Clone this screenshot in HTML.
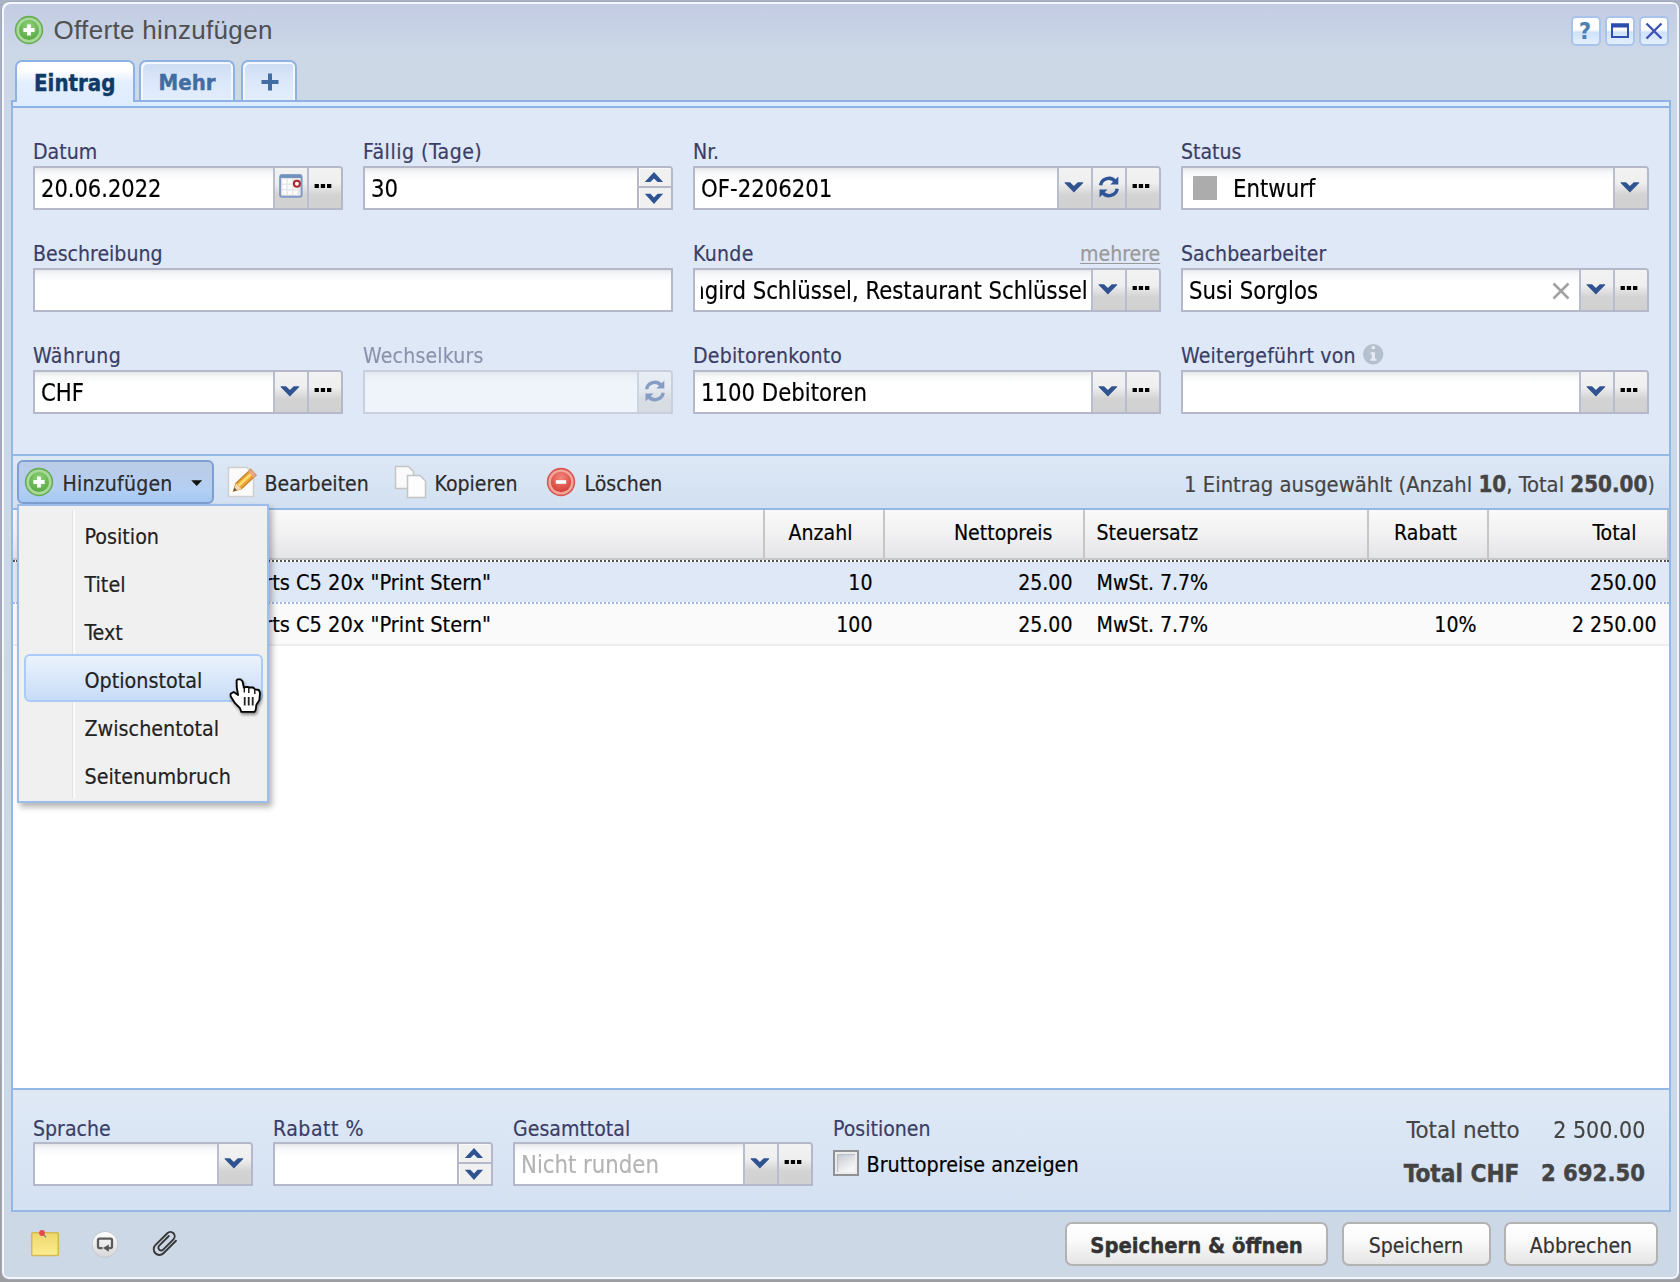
<!DOCTYPE html>
<html lang="de"><head><meta charset="utf-8"><title>Offerte hinzufügen</title>
<style>
*{box-sizing:border-box;margin:0;padding:0}
html,body{width:1680px;height:1282px;overflow:hidden}
body{-webkit-text-stroke:.18px;background:linear-gradient(#a8b1c6,#9c9da0);font-family:"DejaVu Sans Condensed","Liberation Sans",sans-serif;font-size:21.1px;color:#000;position:relative}
.abs{position:absolute}
.t{position:absolute;white-space:nowrap;line-height:1}
.t11{font-size:21.1px}.t12{font-size:23px}
.b11{font-size:21.5px;font-weight:bold;-webkit-text-stroke:.4px}.b12{font-size:23.6px;font-weight:bold;-webkit-text-stroke:.4px}
b{-webkit-text-stroke:.4px}
#win{position:absolute;left:1px;top:1px;width:1679px;height:1279px;border-radius:8px;background:linear-gradient(#c2cbe3 0,#c7d1e5 24px,#cdd8e7 56px,#cdd8e7 100%);border:1px solid #a3a9b6;box-shadow:inset 2px 2px 0 #f4f7fb,inset 0 -2px 0 #f4f7fb,inset -2px 0 0 #f0f5fb}
.lbl{position:absolute;white-space:nowrap;line-height:1;font-size:21.1px;color:#3a3d66}
.fld{position:absolute;height:44px;border:2px solid #b5b8c8;background:linear-gradient(#e4e7ea 0,#f6f7f8 4px,#fff 12px,#fff 100%);border-radius:0 4px 0 0;overflow:hidden}
.fld.plain{border-radius:0}
.fld .v{position:absolute;left:6px;top:9px;font-size:24px;line-height:1;white-space:nowrap;transform:scaleX(.985);transform-origin:left center}
.trg{position:absolute;top:0;width:34px;height:40px;border-left:2px solid #b8bdd0;background:linear-gradient(#f2f2f2 0,#efefef 15px,#d3d3d3 27px,#d1d1d1 100%)}
.trg svg{position:absolute;left:0;top:0}
.spin{position:absolute;top:0;width:34px;height:40px;border-left:2px solid #b5b8c8;background:#f0f0f0;box-shadow:inset 1px 1px 0 #fafafa}
.spin:after{content:"";position:absolute;left:0;right:0;top:18px;height:2px;background:#b5b8c8}
.dis{opacity:.5}
</style></head>
<body>
<div id="win"></div>
<svg class="abs" style="left:14px;top:15px" width="30" height="30" viewBox="0 0 30 30"><defs><radialGradient id="gg" cx="50%" cy="30%" r="75%"><stop offset="0" stop-color="#8fd279"/><stop offset="1" stop-color="#55a540"/></radialGradient></defs><circle cx="15" cy="15" r="14.2" fill="#66ad52"/><circle cx="15" cy="15" r="12.600" fill="#a9d99a"/><circle cx="15" cy="15" r="10" fill="url(#gg)"/><path d="M13.100 9.400h3.800v3.700h3.700v3.800h-3.700v3.700h-3.800v-3.700H9.400v-3.800h3.700z" fill="#fff"/></svg>
<div class="t" style="left:53.5px;top:17.100px;font-family:'Liberation Sans',sans-serif;font-size:26px;letter-spacing:.32px;color:#505050;-webkit-text-stroke:0">Offerte hinzufügen</div>
<div class="abs" style="left:1571px;top:16px;width:30px;height:30px;border:2px solid #a9c4ec;border-radius:5px;background:linear-gradient(#fff 0,#fff 45%,#cfe2fa 55%,#e3effd 100%)"><div class="t" style="left:6px;top:1.5px;font-weight:bold;font-size:23px;color:#4f7fb0">?</div></div>
<div class="abs" style="left:1605px;top:16px;width:30px;height:30px;border:2px solid #a9c4ec;border-radius:5px;background:linear-gradient(#fff 0,#fff 45%,#cfe2fa 55%,#e3effd 100%)"><svg width="26" height="26" viewBox="0 0 26 26" style="position:absolute;left:0;top:0"><rect x="5" y="6.5" width="16" height="12.5" fill="none" stroke="#2d4eb0" stroke-width="2"/><rect x="4" y="5.5" width="18" height="4" fill="#2d4eb0"/></svg></div>
<div class="abs" style="left:1639px;top:16px;width:30px;height:30px;border:2px solid #a9c4ec;border-radius:5px;background:linear-gradient(#fff 0,#fff 45%,#cfe2fa 55%,#e3effd 100%)"><svg width="26" height="26" viewBox="0 0 26 26" style="position:absolute;left:0;top:0"><path d="M5.5 5.5l15 15M20.500 5.5l-15 15" stroke="#3e53b3" stroke-width="2.4"/></svg></div>
<div class="abs" style="left:11px;top:100px;width:1660px;height:8px;background:#deecfd;border-top:2px solid #8db2e3;border-bottom:2px solid #8db2e3;border-left:2px solid #8db2e3;border-right:2px solid #8db2e3"></div>
<div class="abs" style="left:15px;top:60px;width:120px;height:42px;border:2px solid #8db2e3;border-bottom:none;border-radius:7px 7px 0 0;background:linear-gradient(#fff 0,#fff 8px,#e4effd 20px,#deecfd 100%)"></div>
<div class="t b11" style="left:34px;top:71.500px;color:#0f3a66;font-size:22.100px">Eintrag</div>
<div class="abs" style="left:139px;top:60px;width:96px;height:40px;border:2px solid #8db2e3;border-bottom:none;border-radius:7px 7px 0 0;background:linear-gradient(#cddcf3 0,#dbe7fa 50%,#e3eefc 100%);box-shadow:inset 2px 2px 0 #f4f8fe,inset -2px 0 0 #f4f8fe"></div>
<div class="t b11" style="left:158.500px;top:71.500px;color:#416da3;font-size:22px">Mehr</div>
<div class="abs" style="left:241px;top:60px;width:56px;height:40px;border:2px solid #8db2e3;border-bottom:none;border-radius:7px 7px 0 0;background:linear-gradient(#cddcf3 0,#dbe7fa 50%,#e3eefc 100%);box-shadow:inset 2px 2px 0 #f4f8fe,inset -2px 0 0 #f4f8fe"></div>
<svg class="abs" style="left:260px;top:72px" width="20" height="20"><path d="M8 1.500h4v6.500h6.500v4h-6.500v6.500h-4v-6.500h-6.500v-4h6.500z" fill="#416da3"/></svg>
<div class="abs" style="left:11px;top:108px;width:1660px;height:1104px;border:2px solid #94b8e6;border-top:none;background:#fff"></div>
<div class="abs" style="left:13px;top:108px;width:1656px;height:346px;background:#dfe8f6"></div>
<div class="abs" style="left:13px;top:454px;width:1656px;height:2px;background:#94b8e6"></div>
<div class="abs" style="left:13px;top:456px;width:1656px;height:52px;background:linear-gradient(#dde8f6,#d2e0f1)"></div>
<div class="abs" style="left:13px;top:508px;width:1656px;height:2px;background:#94b8e6"></div>
<div class="abs" style="left:13px;top:1088px;width:1656px;height:2px;background:#94b8e6"></div>
<div class="abs" style="left:13px;top:1090px;width:1656px;height:120px;background:linear-gradient(#dfe9f6,#d4e1f2)"></div>
<div class="lbl" style="left:33px;top:141.4px;">Datum</div>
<div class="fld " style="left:33px;top:166px;width:310px"><span class="v" style="transform:scaleX(.975)">20.06.2022</span><div class="trg" style="left:238px"><svg width="32" height="40" viewBox="-0.9 0 32 40"><rect x="4.200" y="7.200" width="21.500" height="21.500" rx="2" fill="#e6e6e8" stroke="#7f9ac5" stroke-width="2"/><rect x="4.200" y="6.600" width="21.500" height="3.400" rx="1" fill="#7391bf"/><g fill="#fff"><rect x="6.500" y="11.500" width="4" height="4"/><rect x="12" y="11.500" width="4" height="4"/><rect x="6.500" y="17" width="4" height="4"/><rect x="12" y="17" width="4" height="4"/><rect x="17.500" y="17" width="4" height="4"/><rect x="6.500" y="22.500" width="4" height="4"/><rect x="12" y="22.500" width="4" height="4"/><rect x="17.500" y="22.500" width="4" height="4"/></g><circle cx="21" cy="15.800" r="3" fill="#fff" stroke="#ac2a2e" stroke-width="2.100"/></svg></div><div class="trg" style="left:272px"><svg width="32" height="40" viewBox="0 0 32 40"><rect x="5.6" y="16" width="4.3" height="4" fill="#000"/><rect x="11.8" y="16" width="4.3" height="4" fill="#000"/><rect x="18" y="16" width="4.3" height="4" fill="#000"/></svg></div></div>
<div class="lbl" style="left:363px;top:141.4px;letter-spacing:.5px">Fällig (Tage)</div>
<div class="fld " style="left:363px;top:166px;width:310px"><span class="v" style="">30</span><div class="spin" style="left:272px"><svg width="32" height="40" viewBox="0 0 32 40" style="position:absolute;left:0;top:0"><path d="M5.800 14.100L15 3.900l9.100 10.200h-5.500L15 10.400l-3.600 3.700z" fill="#2f5291"/><path d="M5.800 25.800h5.600l3.600 3.700 3.600-3.700h5.500L15 36z" fill="#2f5291"/></svg></div></div>
<div class="lbl" style="left:693px;top:141.4px;">Nr.</div>
<div class="fld " style="left:693px;top:166px;width:468px"><span class="v" style="">OF-2206201</span><div class="trg" style="left:362px"><svg width="32" height="40" viewBox="0 0 32 40"><path d="M5.6 14.2H11l3.9 3.7 3.9-3.7h5.400v.9l-9.300 9.400-9.300-9.400z" fill="#2f5291"/></svg></div><div class="trg" style="left:396px"><svg width="32" height="40" viewBox="0 0 32 40"><g fill="none" stroke="#2f5596" stroke-width="3.4"><path d="M7.600 17.200a8.300 8.300 0 0 1 14.800-3.600"/><path d="M24.200 20.800a8.300 8.300 0 0 1-14.800 3.600"/></g><path d="M25.300 8.600v8h-8z" fill="#2f5596"/><path d="M6.500 29.400v-8h8z" fill="#2f5596"/></svg></div><div class="trg" style="left:430px"><svg width="32" height="40" viewBox="0 0 32 40"><rect x="5.6" y="16" width="4.3" height="4" fill="#000"/><rect x="11.8" y="16" width="4.3" height="4" fill="#000"/><rect x="18" y="16" width="4.3" height="4" fill="#000"/></svg></div></div>
<div class="lbl" style="left:1181px;top:141.4px;">Status</div>
<div class="fld " style="left:1181px;top:166px;width:468px"><div class="abs" style="left:10px;top:8px;width:24px;height:24px;background:#acacac"></div><span class="v" style="left:50px">Entwurf</span><div class="trg" style="left:430px"><svg width="32" height="40" viewBox="0 0 32 40"><path d="M5.6 14.2H11l3.9 3.7 3.9-3.7h5.400v.9l-9.300 9.400-9.300-9.400z" fill="#2f5291"/></svg></div></div>
<div class="lbl" style="left:33px;top:243.4px;">Beschreibung</div>
<div class="fld plain" style="left:33px;top:268px;width:640px"></div>
<div class="lbl" style="left:693px;top:243.4px;letter-spacing:.3px">Kunde</div>
<div class="lbl" style="left:1080px;top:243.4px;color:#999;text-decoration:underline;text-decoration-thickness:1.3px;text-underline-offset:2px">mehrere</div>
<div class="fld " style="left:693px;top:268px;width:468px"><div class="abs" style="left:6px;top:0;width:387px;height:40px;overflow:hidden"><span class="v" style="left:auto;right:0px;transform-origin:right center">Irmgird Schlüssel, Restaurant Schlüssel</span></div><div class="trg" style="left:396px"><svg width="32" height="40" viewBox="0 0 32 40"><path d="M5.6 14.2H11l3.9 3.7 3.9-3.7h5.400v.9l-9.300 9.400-9.300-9.400z" fill="#2f5291"/></svg></div><div class="trg" style="left:430px"><svg width="32" height="40" viewBox="0 0 32 40"><rect x="5.6" y="16" width="4.3" height="4" fill="#000"/><rect x="11.8" y="16" width="4.3" height="4" fill="#000"/><rect x="18" y="16" width="4.3" height="4" fill="#000"/></svg></div></div>
<div class="lbl" style="left:1181px;top:243.4px;">Sachbearbeiter</div>
<div class="fld " style="left:1181px;top:268px;width:468px"><svg class="abs" style="left:368px;top:11px" width="20" height="20"><path d="M2.500 2.500l15 15M17.500 2.500l-15 15" stroke="#a2a2a2" stroke-width="2.600"/></svg><span class="v" style="">Susi Sorglos</span><div class="trg" style="left:396px"><svg width="32" height="40" viewBox="0 0 32 40"><path d="M5.6 14.2H11l3.9 3.7 3.9-3.7h5.400v.9l-9.300 9.400-9.300-9.400z" fill="#2f5291"/></svg></div><div class="trg" style="left:430px"><svg width="32" height="40" viewBox="0 0 32 40"><rect x="5.6" y="16" width="4.3" height="4" fill="#000"/><rect x="11.8" y="16" width="4.3" height="4" fill="#000"/><rect x="18" y="16" width="4.3" height="4" fill="#000"/></svg></div></div>
<div class="lbl" style="left:33px;top:345.4px;letter-spacing:.45px">Währung</div>
<div class="fld " style="left:33px;top:370px;width:310px"><span class="v" style="">CHF</span><div class="trg" style="left:238px"><svg width="32" height="40" viewBox="0 0 32 40"><path d="M5.6 14.2H11l3.9 3.7 3.9-3.7h5.400v.9l-9.300 9.400-9.300-9.400z" fill="#2f5291"/></svg></div><div class="trg" style="left:272px"><svg width="32" height="40" viewBox="0 0 32 40"><rect x="5.6" y="16" width="4.3" height="4" fill="#000"/><rect x="11.8" y="16" width="4.3" height="4" fill="#000"/><rect x="18" y="16" width="4.3" height="4" fill="#000"/></svg></div></div>
<div class="dis"><div class="lbl" style="left:363px;top:345.4px;letter-spacing:.18px">Wechselkurs</div><div class="fld " style="left:363px;top:370px;width:310px"><div class="trg" style="left:272px"><svg width="32" height="40" viewBox="0 0 32 40"><g fill="none" stroke="#2f5596" stroke-width="3.4"><path d="M7.600 17.200a8.300 8.300 0 0 1 14.800-3.600"/><path d="M24.200 20.800a8.300 8.300 0 0 1-14.800 3.600"/></g><path d="M25.300 8.600v8h-8z" fill="#2f5596"/><path d="M6.500 29.400v-8h8z" fill="#2f5596"/></svg></div></div></div>
<div class="lbl" style="left:693px;top:345.4px;letter-spacing:.18px">Debitorenkonto</div>
<div class="fld " style="left:693px;top:370px;width:468px"><span class="v" style="">1100 Debitoren</span><div class="trg" style="left:396px"><svg width="32" height="40" viewBox="0 0 32 40"><path d="M5.6 14.2H11l3.9 3.7 3.9-3.7h5.400v.9l-9.300 9.400-9.300-9.400z" fill="#2f5291"/></svg></div><div class="trg" style="left:430px"><svg width="32" height="40" viewBox="0 0 32 40"><rect x="5.6" y="16" width="4.3" height="4" fill="#000"/><rect x="11.8" y="16" width="4.3" height="4" fill="#000"/><rect x="18" y="16" width="4.3" height="4" fill="#000"/></svg></div></div>
<div class="lbl" style="left:1181px;top:345.4px;letter-spacing:.18px">Weitergeführt von</div>
<svg class="abs" style="left:1363px;top:344px" width="21" height="21" viewBox="0 0 21 21"><circle cx="10.200" cy="10.200" r="10.200" fill="#b5c0cf"/><path d="M8.700 2.300h3.200v2.700h-3.200zM7.600 8.200h4.300v6.500h1.500v2.100h-6.100v-2.100h1.500v-4.400h-1.200z" fill="#e6ebf4"/></svg>
<div class="fld " style="left:1181px;top:370px;width:468px"><div class="trg" style="left:396px"><svg width="32" height="40" viewBox="0 0 32 40"><path d="M5.6 14.2H11l3.9 3.7 3.9-3.7h5.400v.9l-9.300 9.400-9.300-9.400z" fill="#2f5291"/></svg></div><div class="trg" style="left:430px"><svg width="32" height="40" viewBox="0 0 32 40"><rect x="5.6" y="16" width="4.3" height="4" fill="#000"/><rect x="11.8" y="16" width="4.3" height="4" fill="#000"/><rect x="18" y="16" width="4.3" height="4" fill="#000"/></svg></div></div>
<div class="abs" style="left:17px;top:460px;width:197px;height:44px;border:2px solid #7f9fd2;border-radius:6px;background:linear-gradient(#bacbe6 0,#b8ceed 40%,#b3cff3 70%,#a5c8f3 100%)"></div>
<svg class="abs" style="left:24px;top:467px" width="30" height="30" viewBox="0 0 30 30"><circle cx="15" cy="15" r="14.2" fill="#66ad52"/><circle cx="15" cy="15" r="12.600" fill="#a9d99a"/><circle cx="15" cy="15" r="10" fill="url(#gg)"/><path d="M13.100 9.400h3.800v3.700h3.700v3.800h-3.700v3.700h-3.800v-3.700H9.400v-3.800h3.700z" fill="#fff"/></svg>
<div class="t t11" style="left:62.500px;top:472.900px;color:#2b2b2b;letter-spacing:.2px">Hinzufügen</div>
<svg class="abs" style="left:190px;top:479px" width="14" height="9"><path d="M1.200 1.200h11l-5.500 5.800z" fill="#111"/></svg>
<svg class="abs" style="left:226px;top:465px" width="34" height="34" viewBox="0 0 34 34"><path d="M2.500 2.500h18.500l6.500 6.500v22.500h-25z" fill="#fbfbfb" stroke="#cfcfcf" stroke-width="1.500"/><path d="M7.500 26.200l2.600-8 14.600-13.800 5.400 5.800-14.600 13.600z" fill="#eea43c" stroke="#c4802a" stroke-width="1.200"/><path d="M11.800 19.600l14.400-13.400 1.800 1.900-14.400 13.400z" fill="#fbe06a"/><path d="M7.500 26.200l2.600-8 5.400 5.800z" fill="#f3d9ad"/><path d="M7.500 26.200l1.100-3.400 2.300 2.400z" fill="#5a4630"/><path d="M22.300 6.600l2.400-2.200 5.400 5.800-2.400 2.200z" fill="#e8a48f"/></svg>
<div class="t t11" style="left:264.500px;top:472.900px;color:#2b2b2b">Bearbeiten</div>
<svg class="abs" style="left:394px;top:465px" width="34" height="34" viewBox="0 0 34 34"><path d="M1.500 1.500h13l5 5v17h-18z" fill="#fafafa" stroke="#c4c4c4" stroke-width="1.500"/><path d="M13.500 10.500h12.500l5.500 5.500v16.500h-18z" fill="#fdfdfd" stroke="#c4c4c4" stroke-width="1.500"/></svg>
<div class="t t11" style="left:434.500px;top:472.900px;color:#2b2b2b">Kopieren</div>
<svg class="abs" style="left:546px;top:467px" width="30" height="30" viewBox="0 0 30 30"><defs><radialGradient id="rg" cx="50%" cy="30%" r="75%"><stop offset="0" stop-color="#f5867b"/><stop offset="1" stop-color="#d23a33"/></radialGradient></defs><circle cx="15" cy="15" r="14.200" fill="#d9564e"/><circle cx="15" cy="15" r="12.600" fill="#f1a59d"/><circle cx="15" cy="15" r="10.200" fill="url(#rg)"/><rect x="9.800" y="13.200" width="10.400" height="3.600" fill="#fff"/></svg>
<div class="t t11" style="left:584.500px;top:472.900px;color:#2b2b2b">Löschen</div>
<div class="t" style="right:25px;top:472.500px;color:#444;font-size:21.800px">1 Eintrag ausgewählt (Anzahl <b style="font-size:22.200px">10</b>, Total <b style="font-size:22.200px">250.00</b>)</div>
<div class="abs" style="left:13px;top:510px;width:1656px;height:50px;background:linear-gradient(#f9f9f9 0,#f1f1f2 50%,#e4e5e7 100%);border-bottom:2px solid #c6c6c6"></div>
<div class="abs" style="left:763px;top:510px;width:2px;height:48px;background:#c6c6c6"></div>
<div class="abs" style="left:883px;top:510px;width:2px;height:48px;background:#c6c6c6"></div>
<div class="abs" style="left:1083px;top:510px;width:2px;height:48px;background:#c6c6c6"></div>
<div class="abs" style="left:1367px;top:510px;width:2px;height:48px;background:#c6c6c6"></div>
<div class="abs" style="left:1487px;top:510px;width:2px;height:48px;background:#c6c6c6"></div>
<div class="abs" style="left:1667px;top:510px;width:2px;height:50px;background:#c2c2c2"></div>
<div class="t t11" style="right:827.5px;top:522px">Anzahl</div>
<div class="t t11" style="right:627.5px;top:522px">Nettopreis</div>
<div class="t t11" style="left:1096.5px;top:522px">Steuersatz</div>
<div class="t t11" style="right:223px;top:522px">Rabatt</div>
<div class="t t11" style="right:43.5px;top:522px">Total</div>
<div class="abs" style="left:13px;top:560px;width:1656px;height:44px;background:#dfe8f6;background-clip:padding-box;border-top:2px dotted #555;border-bottom:2px dotted #a3bae9"></div>
<div class="abs" style="left:13px;top:604px;width:1656px;height:42px;background:#fafafa;border-bottom:2px solid #ededed"></div>
<div class="t t11" style="right:1189px;top:572.1px"><span style="font-size:21.600px">T-Shirts C5 20x "Print Stern"</span></div>
<div class="t t11" style="right:807.5px;top:572.1px">10</div>
<div class="t t11" style="right:607.5px;top:572.1px">25.00</div>
<div class="t t11" style="left:1096.5px;top:572.1px">MwSt. 7.7%</div>
<div class="t t11" style="right:23.5px;top:572.1px">250.00</div>
<div class="t t11" style="right:1189px;top:614.1999999999999px"><span style="font-size:21.600px">T-Shirts C5 20x "Print Stern"</span></div>
<div class="t t11" style="right:807.5px;top:614.1999999999999px">100</div>
<div class="t t11" style="right:607.5px;top:614.1999999999999px">25.00</div>
<div class="t t11" style="left:1096.5px;top:614.1999999999999px">MwSt. 7.7%</div>
<div class="t t11" style="right:203.5px;top:614.1999999999999px">10%</div>
<div class="t t11" style="right:23.5px;top:614.1999999999999px">2 250.00</div>
<div class="lbl" style="left:33px;top:1118.4px;">Sprache</div>
<div class="fld " style="left:33px;top:1142px;width:220px"><div class="trg" style="left:182px"><svg width="32" height="40" viewBox="0 0 32 40"><path d="M5.6 14.2H11l3.9 3.7 3.9-3.7h5.400v.9l-9.300 9.400-9.300-9.400z" fill="#2f5291"/></svg></div></div>
<div class="lbl" style="left:273px;top:1118.4px;letter-spacing:.5px">Rabatt %</div>
<div class="fld " style="left:273px;top:1142px;width:220px"><div class="spin" style="left:182px"><svg width="32" height="40" viewBox="0 0 32 40" style="position:absolute;left:0;top:0"><path d="M5.800 14.100L15 3.900l9.100 10.200h-5.500L15 10.400l-3.600 3.700z" fill="#2f5291"/><path d="M5.800 25.800h5.600l3.600 3.700 3.600-3.700h5.500L15 36z" fill="#2f5291"/></svg></div></div>
<div class="lbl" style="left:513px;top:1118.4px;">Gesamttotal</div>
<div class="fld " style="left:513px;top:1142px;width:300px"><span class="v" style="color:#b4b4b4">Nicht runden</span><div class="trg" style="left:228px"><svg width="32" height="40" viewBox="0 0 32 40"><path d="M5.6 14.2H11l3.9 3.7 3.9-3.7h5.400v.9l-9.300 9.400-9.300-9.400z" fill="#2f5291"/></svg></div><div class="trg" style="left:262px"><svg width="32" height="40" viewBox="0 0 32 40"><rect x="5.6" y="16" width="4.3" height="4" fill="#000"/><rect x="11.8" y="16" width="4.3" height="4" fill="#000"/><rect x="18" y="16" width="4.3" height="4" fill="#000"/></svg></div></div>
<div class="lbl" style="left:833px;top:1118.4px;">Positionen</div>
<div class="abs" style="left:833px;top:1150px;width:26px;height:26px;border:2px solid #8f9194;background:#ececec"><div class="abs" style="left:2px;top:2px;width:18px;height:18px;background:linear-gradient(150deg,#c3c7d0 0,#dfe1e5 45%,#f5f5f5 80%);box-shadow:inset 1px 1px 1px #b9bdc6"></div></div>
<div class="t t11" style="left:866.500px;top:1153.500px;font-size:21.350px">Bruttopreise anzeigen</div>
<div class="t t12" style="right:160.500px;top:1118.600px;color:#444;font-size:23.800px">Total netto</div>
<div class="t t12" style="right:35px;top:1119.100px;color:#444;font-size:23.800px;transform:scaleX(.966);transform-origin:right center">2 500.00</div>
<div class="t b12" style="right:160.500px;top:1161.800px;color:#444;font-size:24.2px">Total CHF</div>
<div class="t b12" style="right:35px;top:1162px;color:#444">2 692.50</div>
<svg class="abs" style="left:29px;top:1227px" width="34" height="32" viewBox="0 0 34 32"><defs><linearGradient id="ng" x1="0" y1="0" x2="0" y2="1"><stop offset="0" stop-color="#efd86c"/><stop offset="1" stop-color="#fbec90"/></linearGradient></defs><rect x="2.700" y="5.700" width="26.600" height="22.800" rx="1" fill="url(#ng)" stroke="#d2ba55" stroke-width="1.600"/><path d="M13.500 6.500l3.600 3.800" stroke="#8a8a8a" stroke-width="1.500"/><circle cx="13" cy="6" r="2.900" fill="#e8474f"/></svg>
<svg class="abs" style="left:90px;top:1229px" width="30" height="30" viewBox="0 0 30 30"><defs><linearGradient id="cg" x1="0" y1="0" x2="0" y2="1"><stop offset="0" stop-color="#fff"/><stop offset="1" stop-color="#d6d6d6"/></linearGradient></defs><circle cx="15" cy="15.400" r="13" fill="url(#cg)" stroke="#c4c8ce" stroke-width="1"/><path d="M12.500 19.100H9.600a1.600 1.600 0 0 1-1.600-1.600V11.200a1.600 1.600 0 0 1 1.600-1.600h10.800a1.600 1.600 0 0 1 1.600 1.600v6.300a1.600 1.600 0 0 1-1.600 1.600h-2" fill="none" stroke="#5c5c5c" stroke-width="2.300"/><path d="M13 19.100l5.800-3.700v7.400z" fill="#555"/></svg>
<svg class="abs" style="left:150px;top:1228px" width="30" height="32" viewBox="0 0 30 32"><path transform="translate(15 15.500) rotate(45)" d="M5.800-9.700V8A5.700 5.700 0 0 1-5.600 8V-8.900A4.300 4.300 0 0 1 3-8.900V5.600A2.800 2.800 0 0 1-2.600 5.600V-8" fill="none" stroke="#363636" stroke-width="1.900" stroke-linecap="round"/></svg>
<div class="abs" style="left:1065px;top:1222px;width:263px;height:44px;border:2px solid #b3b3b3;border-radius:7px;background:linear-gradient(#fff 0,#fafafa 40%,#e5e5e5 100%);text-align:center"><span class="b11" style="position:relative;top:8.500px;line-height:1;color:#333;white-space:nowrap"><span style="font-size:21.850px">Speichern &amp; öffnen</span></span></div>
<div class="abs" style="left:1341.5px;top:1222px;width:149px;height:44px;border:2px solid #b3b3b3;border-radius:7px;background:linear-gradient(#fff 0,#fafafa 40%,#e5e5e5 100%);text-align:center"><span class="t11" style="position:relative;top:8.500px;line-height:1;color:#333;white-space:nowrap">Speichern</span></div>
<div class="abs" style="left:1504px;top:1222px;width:154px;height:44px;border:2px solid #b3b3b3;border-radius:7px;background:linear-gradient(#fff 0,#fafafa 40%,#e5e5e5 100%);text-align:center"><span class="t11" style="position:relative;top:8.500px;line-height:1;color:#333;white-space:nowrap">Abbrechen</span></div>
<div class="abs" style="left:17px;top:504px;width:252px;height:299px;background:#f0f0f0;border:2px solid #9dbdea;box-shadow:3px 4px 6px rgba(0,0,0,.30)"></div>
<div class="abs" style="left:72px;top:510px;width:3px;height:288px;background:linear-gradient(90deg,#e2e2e2 50%,#fafafa 50%)"></div>
<div class="abs" style="left:23.500px;top:654px;width:239.500px;height:48px;border:2px solid #a9cbf5;border-radius:6px;background:linear-gradient(#ebf3fd,#c8dcf6)"></div>
<div class="t t11" style="left:84.500px;top:525.9px;color:#222;font-size:21.300px">Position</div>
<div class="t t11" style="left:84.500px;top:573.9px;color:#222;font-size:21.300px">Titel</div>
<div class="t t11" style="left:84.500px;top:621.9px;color:#222;font-size:21.300px">Text</div>
<div class="t t11" style="left:84.500px;top:669.9px;color:#222;font-size:21.300px">Optionstotal</div>
<div class="t t11" style="left:84.500px;top:717.9px;color:#222;font-size:21.300px">Zwischentotal</div>
<div class="t t11" style="left:84.500px;top:765.9px;color:#222;font-size:21.300px">Seitenumbruch</div>
<svg class="abs" style="left:226px;top:675px;filter:drop-shadow(1px 2px 1.500px rgba(0,0,0,.45))" width="40" height="42" viewBox="226 675 40 42"><path d="M236.600 680.600l.9-1.200h3.100l1.900 1.900 1.300 6.200 3.100-.6 3.100.6h3.100l1.900 1.900 3.800.6 1.200 2.500-.6 7.500-3.100 5-.6 5-1.300 1.900h-13.100l-1.300-3.700-5-5-4.400-6.900v-2.500l3.100-1.900 4.400 3.100-1.300-7.500z" fill="#fff" stroke="#000" stroke-width="1.800" stroke-linejoin="round"/><path d="M244.700 697v8.500M248.700 697v8.500M252.700 697v8.500" stroke="#222" stroke-width="1.800"/><path d="M244.300 687.500v5M248.800 688v5M254.800 689.500v4.500" stroke="#111" stroke-width="1.400"/></svg>
</body></html>
